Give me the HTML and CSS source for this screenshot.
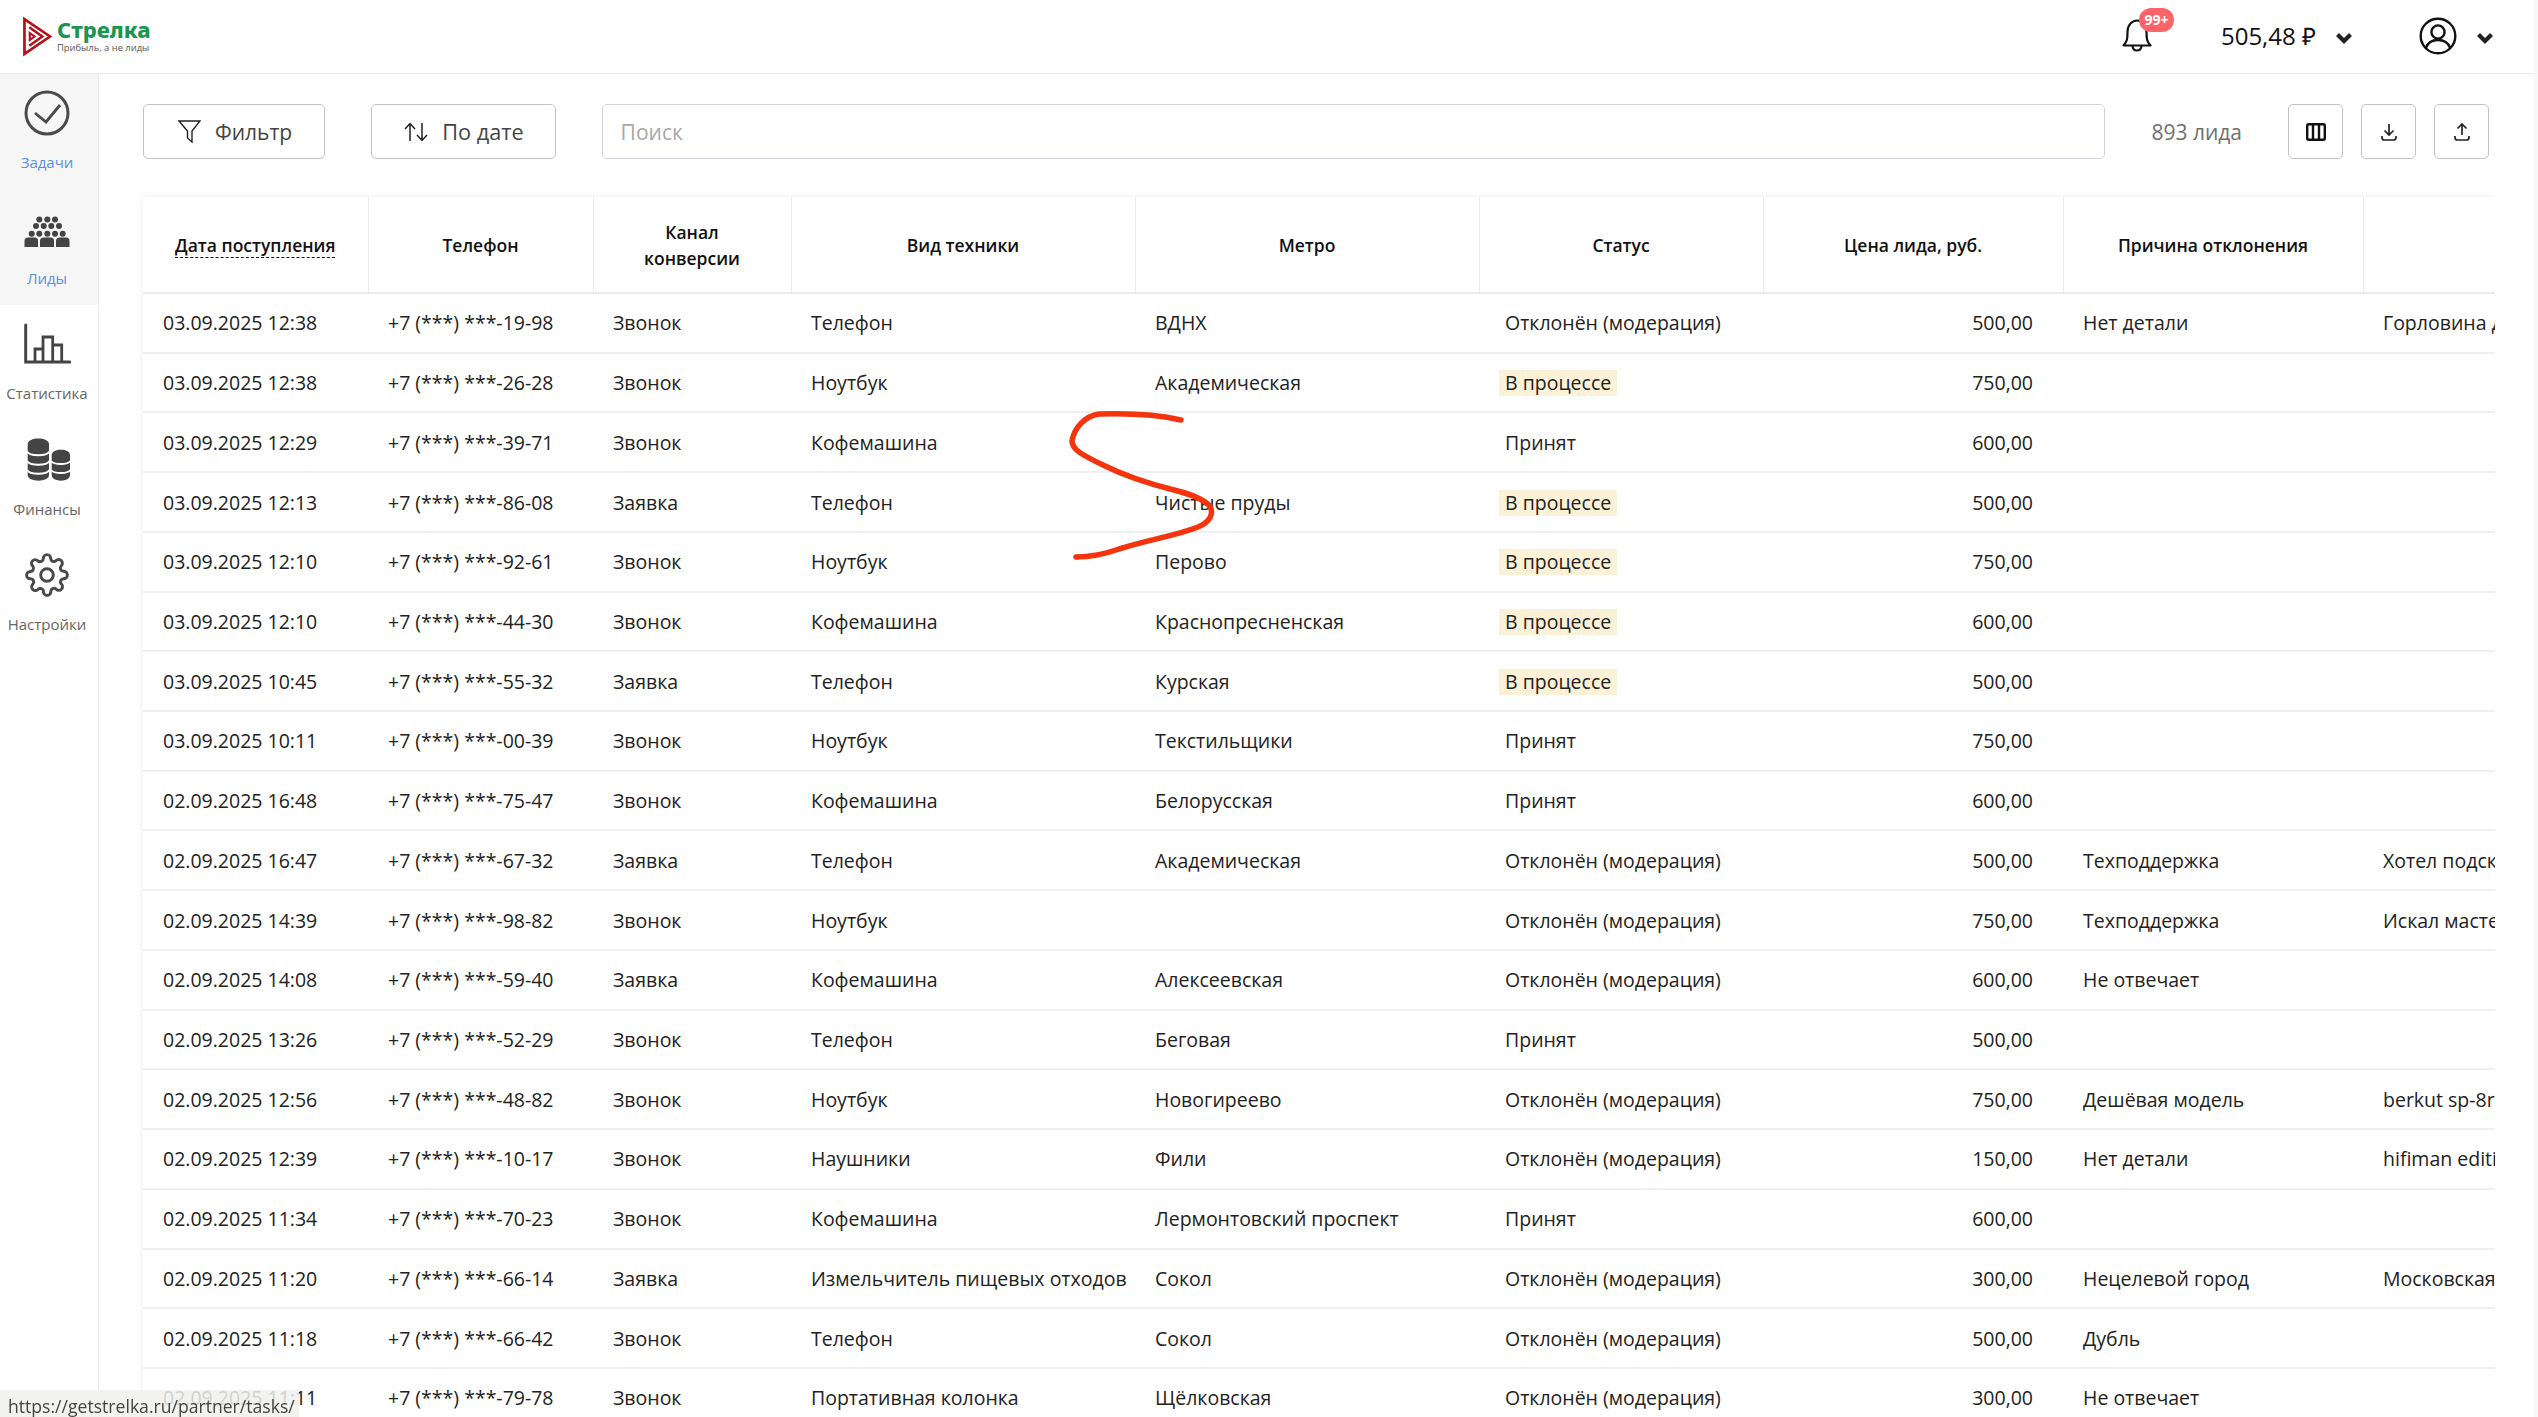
FILE: index.html
```html
<!DOCTYPE html>
<html lang="ru">
<head>
    <meta charset="UTF-8">
    <title>Стрелка - Лиды</title>
    <link rel="stylesheet" href="styles.css">
</head>
<body>
    <header class="topbar">
        <a href="#" class="logo">
            <svg class="logo-mark" viewBox="0 0 30 42" fill="none" stroke="#b01319">
                <path d="M1.5 3 L28 21 L1.5 39 Z" stroke-width="2.8"/>
                <path d="M6.5 11.5 L20 21 L6.5 30.5" stroke-width="2.6"/>
                <path d="M7 17.5 L12 21 L7 24.5 Z" stroke-width="2.2"/>
            </svg>
            <div class="logo-text">
                <div class="logo-name">Стрелка</div>
                <div class="logo-sub">Прибыль, а не лиды</div>
            </div>
        </a>
        <div class="topbar-right">
            <div class="bell">
                <svg viewBox="0 0 30 33" width="30" height="33" fill="none" stroke="#111" stroke-width="2.2" stroke-linejoin="round">
                    <path d="M1.5 26.5 C5 23 5.5 20 5.5 13 C5.5 6 10 1.5 15 1.5 C20 1.5 24.5 6 24.5 13 C24.5 20 25 23 28.5 26.5 Z"/>
                    <path d="M10.5 27 C11 33 19 33 19.5 27"/>
                </svg>
                <span class="bell-badge">99+</span>
            </div>
            <div class="balance">505,48 ₽</div>
            <svg class="chevron" viewBox="0 0 16 11" width="16" height="11"><path d="M0 3 L3 0 L8 5 L13 0 L16 3 L8 11 Z" fill="#222"/></svg>
            <svg class="user-icon" viewBox="0 0 38 38" width="38" height="38" fill="none" stroke="#111" stroke-width="2.4">
                <circle cx="19" cy="19" r="17.3"/>
                <circle cx="19" cy="15" r="6.6"/>
                <path d="M6.8 31 C9 25 13 23 19 23 C25 23 29 25 31.2 31"/>
            </svg>
            <svg class="chevron" viewBox="0 0 16 11" width="16" height="11"><path d="M0 3 L3 0 L8 5 L13 0 L16 3 L8 11 Z" fill="#222"/></svg>
        </div>
    </header>

    <div class="layout">
        <nav class="sidebar">
            <a href="#" class="nav-item active">
                <svg viewBox="0 0 50 50" fill="none" stroke="#4a4a4a" stroke-width="3">
                    <circle cx="25" cy="25" r="21"/>
                    <path d="M13 25 L24 34 L38 17" stroke-width="2.8"/>
                </svg>
                <span>Задачи</span>
            </a>
            <a href="#" class="nav-item active">
                <svg viewBox="0 0 50 50" fill="#444">
                    <circle cx="17.3" cy="15.5" r="3"/><circle cx="25.3" cy="15.5" r="3"/><circle cx="33" cy="15.5" r="3"/>
                    <circle cx="14" cy="22" r="3"/><circle cx="21.7" cy="22" r="3"/><circle cx="29.3" cy="22" r="3"/><circle cx="37" cy="22" r="3"/>
                    <circle cx="9.7" cy="29.8" r="3"/><circle cx="17.3" cy="29.8" r="3"/><circle cx="25.3" cy="29.8" r="3"/><circle cx="33" cy="29.8" r="3"/><circle cx="40.7" cy="29.8" r="3"/>
                    <path d="M2.5 43 V37 Q2.5 33.5 6 33.5 H13 Q16 33.5 16 37 V43 Z"/>
                    <path d="M18 43 V37 Q18 33.5 21.5 33.5 H29 Q32 33.5 32 37 V43 Z"/>
                    <path d="M34 43 V37 Q34 33.5 37.5 33.5 H44.5 Q47.5 33.5 47.5 37 V43 Z"/>
                </svg>
                <span>Лиды</span>
            </a>
            <a href="#" class="nav-item">
                <svg viewBox="0 0 50 50" fill="none" stroke="#444" stroke-width="3">
                    <path d="M3.7 6 V43 H47.7" stroke-linecap="round"/>
                    <path d="M13 43 V30 H21 V43 M21 30 V18 H30.7 V43 M30.7 26 H39.7 V43" stroke-width="2.8"/>
                </svg>
                <span>Статистика</span>
            </a>
            <a href="#" class="nav-item">
                <svg viewBox="0 0 50 50" fill="#444">
                    <path d="M5.7 9 C5.7 1.5 27 1.5 27 9 V40 C27 47.5 5.7 47.5 5.7 40 Z"/>
                    <path d="M29.7 20 C29.7 13 48 13 48 20 V40 C48 47.5 29.7 47.5 29.7 40 Z"/>
                    <g fill="none" stroke="#fff" stroke-width="2">
                        <path d="M5 16.5 C8 21.5 24.5 21.5 27.5 16.5"/>
                        <path d="M5 26 C8 31 24.5 31 27.5 26"/>
                        <path d="M5 35 C8 40 24.5 40 27.5 35"/>
                        <path d="M29 26 C32 30 45.5 30 48.5 26"/>
                        <path d="M29 35 C32 39 45.5 39 48.5 35"/>
                    </g>
                </svg>
                <span>Финансы</span>
            </a>
            <a href="#" class="nav-item">
                <svg viewBox="-1.5 -1.5 27 27" fill="none" stroke="#4a4a4a" stroke-width="1.6" stroke-linejoin="round">
                    <circle cx="12" cy="12" r="3.4"/>
                    <path d="M19.4 15a1.65 1.65 0 0 0 .33 1.82l.06.06a2 2 0 0 1 0 2.83 2 2 0 0 1-2.83 0l-.06-.06a1.65 1.65 0 0 0-1.82-.33 1.65 1.65 0 0 0-1 1.51V21a2 2 0 0 1-2 2 2 2 0 0 1-2-2v-.09A1.65 1.65 0 0 0 9 19.4a1.65 1.65 0 0 0-1.82.33l-.06.06a2 2 0 0 1-2.83 0 2 2 0 0 1 0-2.83l.06-.06a1.65 1.65 0 0 0 .33-1.82 1.65 1.65 0 0 0-1.51-1H3a2 2 0 0 1-2-2 2 2 0 0 1 2-2h.09A1.65 1.65 0 0 0 4.6 9a1.65 1.65 0 0 0-.33-1.82l-.06-.06a2 2 0 0 1 0-2.83 2 2 0 0 1 2.83 0l.06.06a1.65 1.65 0 0 0 1.82.33H9a1.65 1.65 0 0 0 1-1.51V3a2 2 0 0 1 2-2 2 2 0 0 1 2 2v.09a1.65 1.65 0 0 0 1 1.51 1.65 1.65 0 0 0 1.82-.33l.06-.06a2 2 0 0 1 2.83 0 2 2 0 0 1 0 2.83l-.06.06a1.65 1.65 0 0 0-.33 1.82V9a1.65 1.65 0 0 0 1.51 1H21a2 2 0 0 1 2 2 2 2 0 0 1-2 2h-.09a1.65 1.65 0 0 0-1.51 1z"/>
                </svg>
                <span>Настройки</span>
            </a>
        </nav>

        <main class="content">
            <div class="toolbar">
                <button class="btn btn-filter">
                    <svg viewBox="0 0 23 23" width="23" height="23" fill="none" stroke="#222" stroke-width="1.4"><path d="M1 1 H22 L14 11 V22 L9.5 18 V11 Z"/></svg>
                    Фильтр
                </button>
                <button class="btn btn-sort">
                    <svg viewBox="0 0 24 20" width="24" height="20" fill="none" stroke="#222" stroke-width="1.5"><path d="M6 19 V2 M1 7 L6 1.5 L11 7 M18 1 V18 M13 13 L18 18.5 L23 13"/></svg>
                    По дате
                </button>
                <input class="search" type="text" placeholder="Поиск">
                <div class="count">893 лида</div>
                <div class="icon-buttons">
                    <button class="btn-icon">
                        <svg viewBox="0 0 20 18" width="20" height="18" fill="none" stroke="#111" stroke-width="2.4"><rect x="1.2" y="1.2" width="17.6" height="15.6" rx="1.5"/><path d="M7 1 V17 M13 1 V17"/></svg>
                    </button>
                    <button class="btn-icon">
                        <svg viewBox="0 0 16 18" width="16" height="18" fill="none" stroke="#222" stroke-width="1.7"><path d="M8 1 V12 M3.5 7.5 L8 12 L12.5 7.5 M1 13 V14.5 Q1 17 3.5 17 H12.5 Q15 17 15 14.5 V13"/></svg>
                    </button>
                    <button class="btn-icon">
                        <svg viewBox="0 0 16 18" width="16" height="18" fill="none" stroke="#222" stroke-width="1.7"><path d="M8 12 V1 M3.5 5.5 L8 1 L12.5 5.5 M1 13 V14.5 Q1 17 3.5 17 H12.5 Q15 17 15 14.5 V13"/></svg>
                    </button>
                </div>
            </div>

            <div class="table-wrap">
                <table class="leads">
                    <colgroup>
                        <col class="c-date"><col class="c-phone"><col class="c-channel"><col class="c-type"><col class="c-metro"><col class="c-status"><col class="c-price"><col class="c-reason"><col class="c-comment">
                    </colgroup>
                    <thead>
                        <tr>
                            <th><span class="sorted">Дата поступления</span></th>
                            <th>Телефон</th>
                            <th>Канал<br>конверсии</th>
                            <th>Вид техники</th>
                            <th>Метро</th>
                            <th>Статус</th>
                            <th>Цена лида, руб.</th>
                            <th>Причина отклонения</th>
                            <th></th>
                        </tr>
                    </thead>
                    <tbody>
                        <tr><td>03.09.2025 12:38</td><td>+7 (***) ***-19-98</td><td>Звонок</td><td>Телефон</td><td>ВДНХ</td><td><span class="status">Отклонён (модерация)</span></td><td class="price">500,00</td><td>Нет детали</td><td>Горловина для</td></tr>
                        <tr><td>03.09.2025 12:38</td><td>+7 (***) ***-26-28</td><td>Звонок</td><td>Ноутбук</td><td>Академическая</td><td><span class="status wait">В процессе</span></td><td class="price">750,00</td><td></td><td></td></tr>
                        <tr><td>03.09.2025 12:29</td><td>+7 (***) ***-39-71</td><td>Звонок</td><td>Кофемашина</td><td></td><td><span class="status">Принят</span></td><td class="price">600,00</td><td></td><td></td></tr>
                        <tr><td>03.09.2025 12:13</td><td>+7 (***) ***-86-08</td><td>Заявка</td><td>Телефон</td><td>Чистые пруды</td><td><span class="status wait">В процессе</span></td><td class="price">500,00</td><td></td><td></td></tr>
                        <tr><td>03.09.2025 12:10</td><td>+7 (***) ***-92-61</td><td>Звонок</td><td>Ноутбук</td><td>Перово</td><td><span class="status wait">В процессе</span></td><td class="price">750,00</td><td></td><td></td></tr>
                        <tr><td>03.09.2025 12:10</td><td>+7 (***) ***-44-30</td><td>Звонок</td><td>Кофемашина</td><td>Краснопресненская</td><td><span class="status wait">В процессе</span></td><td class="price">600,00</td><td></td><td></td></tr>
                        <tr><td>03.09.2025 10:45</td><td>+7 (***) ***-55-32</td><td>Заявка</td><td>Телефон</td><td>Курская</td><td><span class="status wait">В процессе</span></td><td class="price">500,00</td><td></td><td></td></tr>
                        <tr><td>03.09.2025 10:11</td><td>+7 (***) ***-00-39</td><td>Звонок</td><td>Ноутбук</td><td>Текстильщики</td><td><span class="status">Принят</span></td><td class="price">750,00</td><td></td><td></td></tr>
                        <tr><td>02.09.2025 16:48</td><td>+7 (***) ***-75-47</td><td>Звонок</td><td>Кофемашина</td><td>Белорусская</td><td><span class="status">Принят</span></td><td class="price">600,00</td><td></td><td></td></tr>
                        <tr><td>02.09.2025 16:47</td><td>+7 (***) ***-67-32</td><td>Заявка</td><td>Телефон</td><td>Академическая</td><td><span class="status">Отклонён (модерация)</span></td><td class="price">500,00</td><td>Техподдержка</td><td>Хотел подсказку</td></tr>
                        <tr><td>02.09.2025 14:39</td><td>+7 (***) ***-98-82</td><td>Звонок</td><td>Ноутбук</td><td></td><td><span class="status">Отклонён (модерация)</span></td><td class="price">750,00</td><td>Техподдержка</td><td>Искал мастера</td></tr>
                        <tr><td>02.09.2025 14:08</td><td>+7 (***) ***-59-40</td><td>Заявка</td><td>Кофемашина</td><td>Алексеевская</td><td><span class="status">Отклонён (модерация)</span></td><td class="price">600,00</td><td>Не отвечает</td><td></td></tr>
                        <tr><td>02.09.2025 13:26</td><td>+7 (***) ***-52-29</td><td>Звонок</td><td>Телефон</td><td>Беговая</td><td><span class="status">Принят</span></td><td class="price">500,00</td><td></td><td></td></tr>
                        <tr><td>02.09.2025 12:56</td><td>+7 (***) ***-48-82</td><td>Звонок</td><td>Ноутбук</td><td>Новогиреево</td><td><span class="status">Отклонён (модерация)</span></td><td class="price">750,00</td><td>Дешёвая модель</td><td>berkut sp-8r</td></tr>
                        <tr><td>02.09.2025 12:39</td><td>+7 (***) ***-10-17</td><td>Звонок</td><td>Наушники</td><td>Фили</td><td><span class="status">Отклонён (модерация)</span></td><td class="price">150,00</td><td>Нет детали</td><td>hifiman edition</td></tr>
                        <tr><td>02.09.2025 11:34</td><td>+7 (***) ***-70-23</td><td>Звонок</td><td>Кофемашина</td><td>Лермонтовский проспект</td><td><span class="status">Принят</span></td><td class="price">600,00</td><td></td><td></td></tr>
                        <tr><td>02.09.2025 11:20</td><td>+7 (***) ***-66-14</td><td>Заявка</td><td>Измельчитель пищевых отходов</td><td>Сокол</td><td><span class="status">Отклонён (модерация)</span></td><td class="price">300,00</td><td>Нецелевой город</td><td>Московская</td></tr>
                        <tr><td>02.09.2025 11:18</td><td>+7 (***) ***-66-42</td><td>Звонок</td><td>Телефон</td><td>Сокол</td><td><span class="status">Отклонён (модерация)</span></td><td class="price">500,00</td><td>Дубль</td><td></td></tr>
                        <tr><td>02.09.2025 11:11</td><td>+7 (***) ***-79-78</td><td>Звонок</td><td>Портативная колонка</td><td>Щёлковская</td><td><span class="status">Отклонён (модерация)</span></td><td class="price">300,00</td><td>Не отвечает</td><td></td></tr>
                    </tbody>
                </table>
            </div>
        </main>
    </div>

    <!-- hand drawn mark on top of the table -->
    <svg class="scribble" viewBox="0 0 2538 1417" fill="none">
        <path d="M1181 420 C1160 415 1130 413 1099 414 C1085 416 1074 428 1072 441 C1072 449 1080 454 1103 465 C1125 476 1150 484 1174 490 C1190 494 1202 498 1210 506 C1214 514 1210 522 1198 527 C1175 536 1155 538 1119 549 C1105 554 1090 557 1076 557" stroke="#f5330c" stroke-width="5.5" stroke-linecap="round"/>
    </svg>

    <div class="link-status">https://getstrelka.ru/partner/tasks/</div>
</body>
</html>
```

FILE: styles.css
```css
* {
    box-sizing: border-box;
}
html, body {
    height: 100%;
}
body {
    margin: 0;
    overflow: hidden;
    background-color: #fff;
    color: #222;
    font-family: "Open Sans", sans-serif;
    display: flex;
    flex-direction: column;
    padding-right: 4px;
    background-image: linear-gradient(#f8f8f8, #f8f8f8);
    background-repeat: no-repeat;
    background-position: right top;
    background-size: 4px 100%;
}
a {
    text-decoration: none;
}

/* top bar */
.topbar {
    height: 74px;
    flex-shrink: 0;
    border-bottom: 1px solid #eaeaec;
    display: flex;
    align-items: center;
    justify-content: space-between;
    padding: 0 41px 0 23px;
}
.logo {
    display: flex;
    align-items: center;
    gap: 5px;
}
.logo-mark {
    width: 29px;
    height: 41px;
}
.logo-name {
    font-family: "Noto Sans", sans-serif;
    font-size: 22px;
    font-weight: 800;
    line-height: 24px;
    color: #1a9650;
    margin-top: -2px;
}
.logo-sub {
    font-size: 9.4px;
    line-height: 13px;
    color: #555;
    white-space: nowrap;
}
.topbar-right {
    display: flex;
    align-items: center;
}
.bell {
    position: relative;
    width: 30px;
    height: 33px;
    margin-top: -2px;
    margin-right: 69px;
}
.bell-badge {
    position: absolute;
    left: 17px;
    top: -11px;
    width: 35px;
    height: 24px;
    border-radius: 12px;
    background-color: #fb6468;
    color: #fff;
    font-size: 14px;
    font-weight: 700;
    line-height: 24px;
    text-align: center;
}
.balance {
    font-size: 24px;
    color: #111;
    margin-right: 20px;
    margin-bottom: 2px;
}
.chevron {
    margin-top: 4px;
}
.user-icon {
    margin-left: 67px;
    margin-right: 20px;
    margin-bottom: 2px;
}

/* sidebar */
.layout {
    flex: 1;
    display: flex;
    min-height: 0;
}
.sidebar {
    width: 99px;
    flex-shrink: 0;
    border-right: 1px solid #eaeaf0;
}
.nav-item {
    height: 115.5px;
    padding: 14px 4px 0 0;
    display: flex;
    flex-direction: column;
    align-items: center;
    color: #666;
    font-size: 15px;
    line-height: 20px;
}
.nav-item svg {
    width: 50px;
    height: 50px;
    margin-bottom: 14px;
}
.nav-item.active {
    background-color: #f6f6f7;
    color: #5a8fe6;
}

/* toolbar */
.content {
    flex: 1;
    min-width: 0;
    padding: 30px 0 0 44px;
}
.toolbar {
    display: flex;
    align-items: stretch;
    gap: 46px;
    height: 55px;
    padding-right: 45px;
}
.btn {
    display: flex;
    align-items: center;
    gap: 14px;
    background-color: #fff;
    border: 1px solid #c4c4c6;
    border-radius: 5px;
    font-family: inherit;
    font-size: 21px;
    color: #444;
    padding: 0 32px 0 34px;
}
.btn-sort {
    font-size: 21.7px;
    padding: 0 31px 0 32px;
}
.search {
    flex: 1;
    min-width: 0;
    border: 1px solid #d0d4d8;
    border-radius: 5px;
    font-family: inherit;
    font-size: 21px;
    padding: 0 18px;
    outline: none;
}
.search::placeholder {
    color: #a8a8a8;
}
.count {
    align-self: center;
    font-size: 21px;
    color: #707070;
}
.icon-buttons {
    display: flex;
    gap: 18px;
}
.btn-icon {
    width: 55px;
    display: flex;
    align-items: center;
    justify-content: center;
    background-color: #fff;
    border: 1px solid #c4c4c6;
    border-radius: 5px;
    padding: 0;
}

/* table */
.table-wrap {
    margin-top: 38px;
    margin-right: 39px;
    overflow: hidden;
    box-shadow: 0 0 8px rgba(0,0,0,0.07);
    clip-path: inset(-10px 0 0 -10px);
}
.leads {
    border-collapse: collapse;
    table-layout: fixed;
    width: 2520px;
}
.c-date { width: 225px; }
.c-phone { width: 225px; }
.c-channel { width: 198px; }
.c-type { width: 344px; }
.c-metro { width: 344px; }
.c-status { width: 284px; }
.c-price { width: 300px; }
.c-reason { width: 300px; }
.c-comment { width: 300px; }
.leads th {
    height: 96px;
    padding: 0 10px;
    font-size: 17.5px;
    font-weight: 600;
    line-height: 26px;
    color: #111;
    text-align: center;
    border-right: 1px solid #eaeaf0;
    border-bottom: 2px solid #eaebf0;
}
.sorted {
    border-bottom: 1.5px dashed #111;
}
.leads td {
    height: 59.72px;
    padding: 0 20px;
    font-size: 19.5px;
    color: #222;
    white-space: nowrap;
    overflow: hidden;
    border-bottom: 2px solid #eff0f4;
}
.leads td.price {
    padding-right: 30px;
    text-align: right;
}
.status {
    display: inline-block;
    padding: 0 6px;
    height: 26px;
    line-height: 26px;
}
.status.wait {
    background-color: #faf1d6;
}

/* overlays */
.scribble {
    position: fixed;
    left: 0;
    top: 0;
    width: 2538px;
    height: 1417px;
    pointer-events: none;
}
.link-status {
    position: fixed;
    left: 0;
    bottom: 0;
    height: 27px;
    width: 299px;
    padding-left: 8px;
    background-color: rgba(240, 240, 238, 0.85);
    color: #444;
    font-size: 17.6px;
    line-height: 33px;
    white-space: nowrap;
    overflow: hidden;
    border-top-right-radius: 3px;
}
```
